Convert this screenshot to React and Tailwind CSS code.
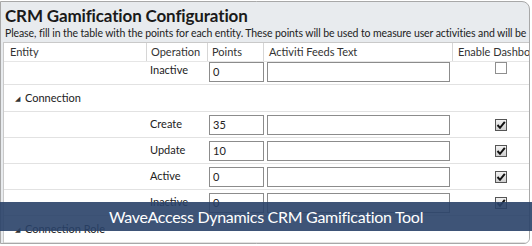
import React from "react";

const rows = [
  { type: "op", label: "Inactive", points: "0", checked: false, first: true },
  { type: "group", label: "Connection" },
  { type: "op", label: "Create", points: "35", checked: true },
  { type: "op", label: "Update", points: "10", checked: true },
  { type: "op", label: "Active", points: "0", checked: true },
  { type: "op", label: "Inactive", points: "0", checked: true },
  { type: "group", label: "Connection Role" },
];

const cols = "grid grid-cols-[143px_61px_56px_189px_1fr]";

function Check({ checked }) {
  if (!checked) {
    return <div className="w-[12px] h-[12px] border border-[#8f8f8f] bg-white" />;
  }
  return (
    <div className="w-[12px] h-[12px] border border-[#555] bg-gradient-to-b from-[#f2f2f2] to-[#cfcfcf] flex items-center justify-center">
      <svg width="10" height="10" viewBox="0 0 10 10">
        <path d="M1.5 5 L4 7.8 L8.8 1.8" fill="none" stroke="#111" strokeWidth="2" />
      </svg>
    </div>
  );
}

function Row({ row }) {
  if (row.type === "group") {
    return (
      <div className="h-[27px] flex items-center border-b border-[#e2e2e2] pl-[11px]">
        <span className="text-[7px] text-[#333] leading-none mr-[5px] mt-[1px]">◢</span>
        <span>{row.label}</span>
      </div>
    );
  }
  return (
    <div className={`${cols} ${row.first ? "h-[23px] items-start" : "h-[26px] items-center"} border-b border-[#e2e2e2]`}>
      <div />
      <div className="pl-[3px]">{row.label}</div>
      <div className="pl-[1px]">
        <div className="w-[55px] h-[20px] border border-[#8c8c8c] bg-white pl-[3px] leading-[18px]">{row.points}</div>
      </div>
      <div className="pl-[3px]">
        <div className="w-[183px] h-[20px] border border-[#8c8c8c] bg-white" />
      </div>
      <div className="pl-[42px]">
        <Check checked={row.checked} />
      </div>
    </div>
  );
}

export default function App() {
  return (
    <div className="relative w-[532px] h-[246px] bg-white overflow-hidden font-['Lato',sans-serif] text-[#222]">
      <div className="mt-[1px] w-[530px] h-[243px] border border-[#a8a8a8] rounded-tr-[8px] rounded-br-[6px] bg-[#e8ebee] overflow-hidden flex flex-col">
        <div className="h-[42px] pl-[4px] pt-[3px]">
          <h1 className="text-[17px] font-bold leading-[22px] text-[#1a1a1a] tracking-[-0.15px]">CRM Gamification Configuration</h1>
          <p className="text-[10.5px] leading-[12px] whitespace-nowrap text-[#222] tracking-[-0.1px]">
            Please, fill in the table with the points for each entity. These points will be used to measure user activities and will be
          </p>
        </div>
        <div className="flex-1 ml-[2px] bg-white border-t border-l border-[#c9c9c9] text-[11px]">
          <div className={`${cols} h-[19px] items-center text-[#333] border-b border-[#e6e6e6]`}>
            <div className="pl-[6px] h-full flex items-center border-r border-[#d6d6d6]">Entity</div>
            <div className="pl-[4px] h-full flex items-center border-r border-[#d6d6d6]">Operation</div>
            <div className="pl-[4px] h-full flex items-center border-r border-[#d6d6d6]">Points</div>
            <div className="pl-[5px] h-full flex items-center border-r border-[#d6d6d6]">Activiti Feeds Text</div>
            <div className="pl-[5px] h-full flex items-center whitespace-nowrap overflow-hidden">Enable Dashboard</div>
          </div>
          {rows.map((row, i) => (
            <Row key={i} row={row} />
          ))}
        </div>
      </div>
      <div className="absolute left-0 right-0 top-[202px] h-[29px] bg-[#294168]/90 flex items-center justify-center">
        <span className="text-white text-[16px] leading-none tracking-[-0.3px]">WaveAccess Dynamics CRM Gamification Tool</span>
      </div>
    </div>
  );
}
